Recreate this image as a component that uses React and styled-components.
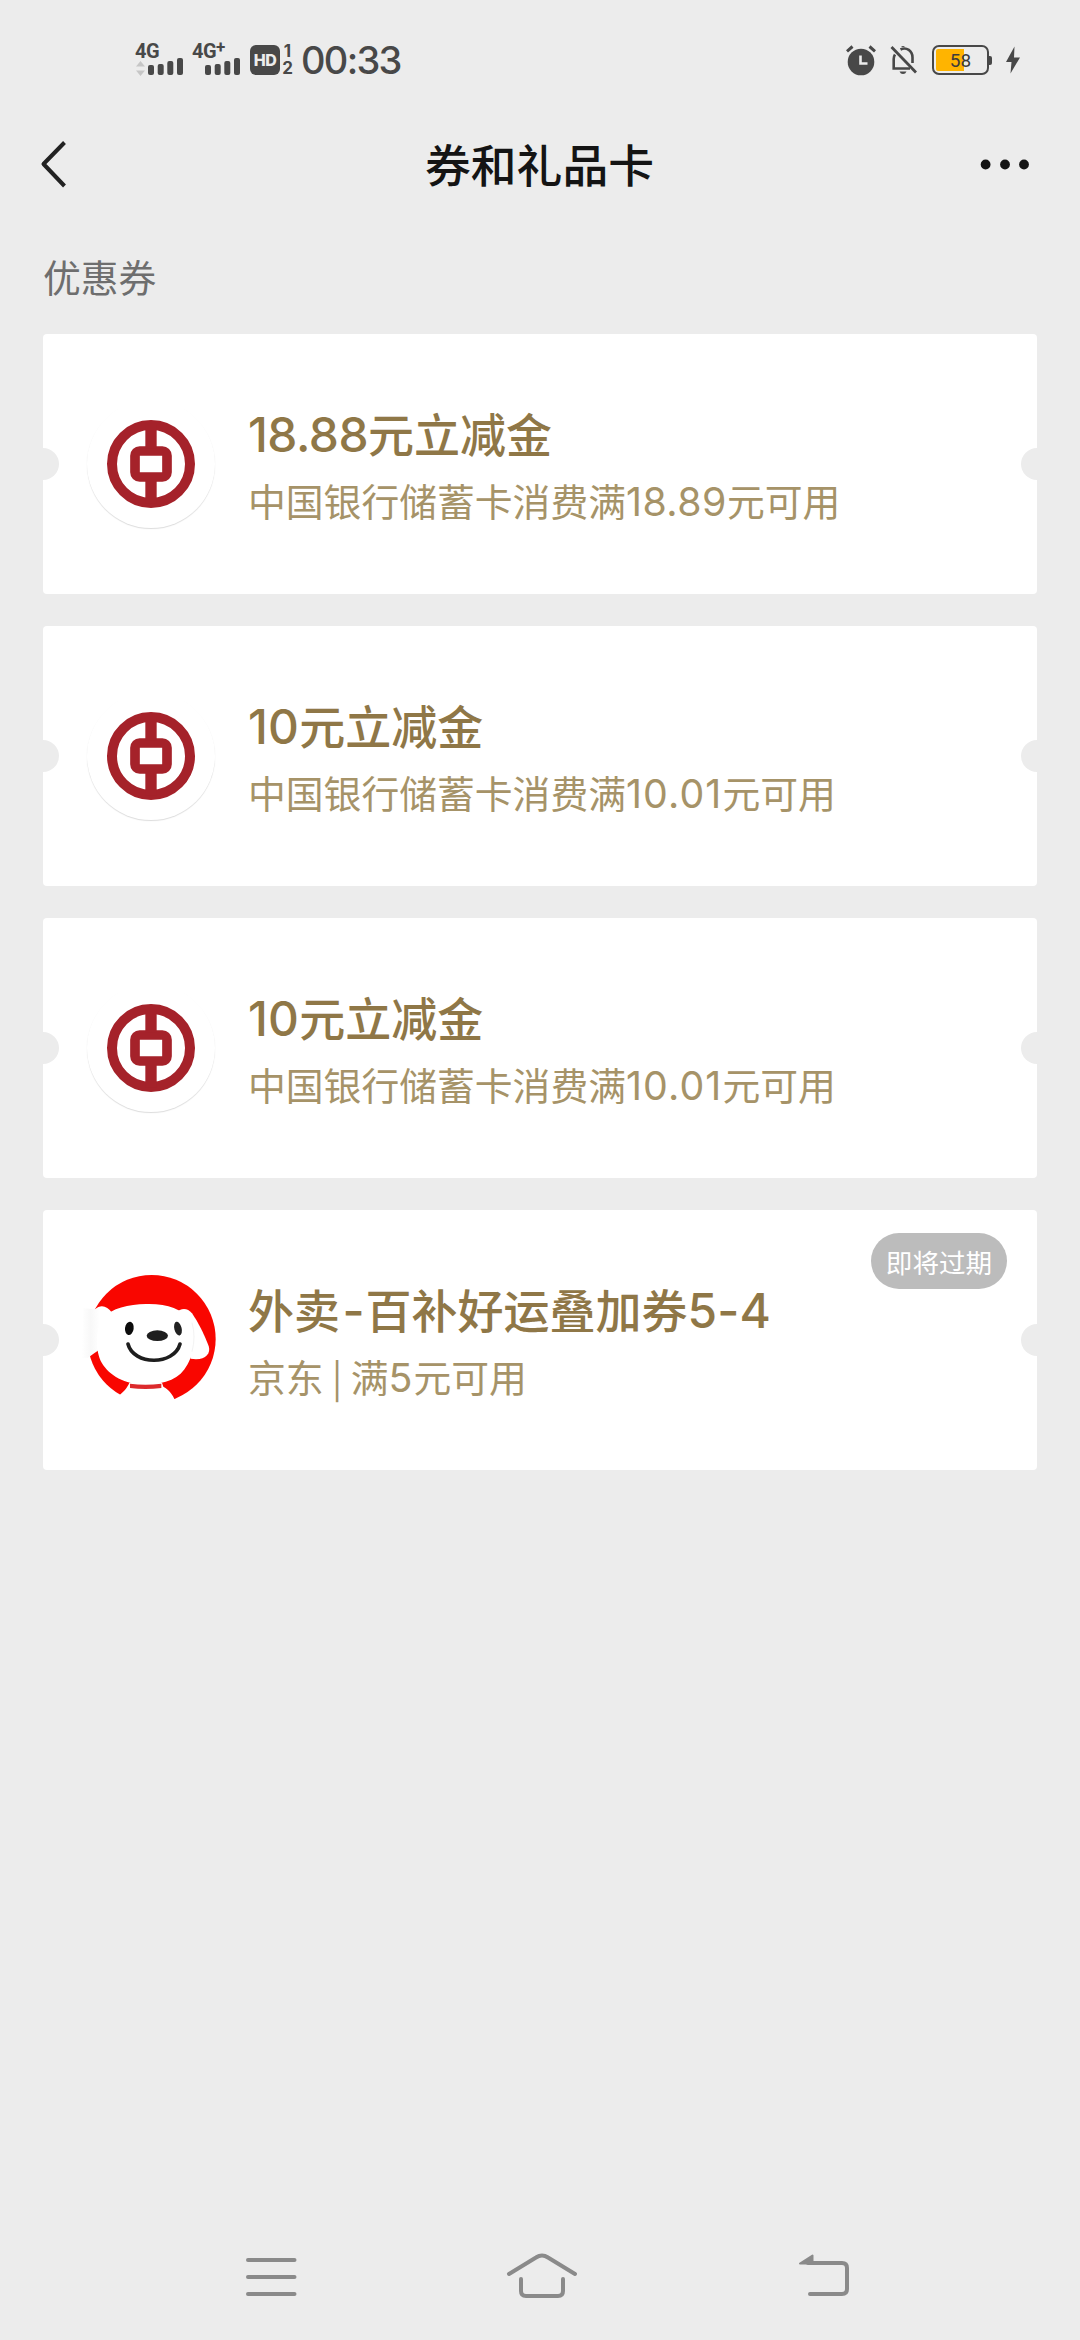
import React from "react";
import styled, { createGlobalStyle } from "styled-components";

const GlobalStyle = createGlobalStyle`
  * {
    box-sizing: border-box;
  }

  body {
    margin: 0;
    background: #ececec;
    font-family: "Noto Sans CJK SC", sans-serif;
  }

  svg {
    display: block;
    flex-shrink: 0;
    overflow: visible;
  }
`;

// Layout
const Screen = styled.div`
  width: 1080px;
  height: 2340px;
  display: flex;
  flex-direction: column;
  background: #ececec;
  overflow: hidden;
`;

const StatusBar = styled.div`
  height: 120px;
  padding: 0 59px 0 135px;
  display: flex;
  align-items: center;
  justify-content: space-between;
  color: #484848;
`;

const StatusGroup = styled.div`
  display: flex;
  align-items: center;
`;

const StatusIcons = styled(StatusGroup)`
  gap: 14px;
`;

const Signal = styled.div`
  position: relative;
  width: ${(props) => props.$width}px;
  height: 36px;
`;

const Network = styled.span`
  position: absolute;
  left: 0;
  top: -1px;
  font: 700 20px/20px Roboto, sans-serif;
  letter-spacing: -0.5px;
  white-space: nowrap;

  sup {
    font-size: 17px;
    line-height: 0;
    vertical-align: 5px;
  }
`;

const HdBadge = styled.div`
  width: 30px;
  height: 30px;
  border-radius: 6px;
  background: #484848;
  color: #ececec;
  display: flex;
  align-items: center;
  justify-content: center;
  font: 800 16px/30px Inter, sans-serif;
  letter-spacing: -0.5px;
`;

const SimNumbers = styled.div`
  width: 13px;
  margin-left: 1px;
  display: flex;
  flex-direction: column;
  align-items: center;
  font: 700 17px/17px Inter, sans-serif;
`;

const Clock = styled.div`
  margin-left: 7px;
  font: 500 38px/40px Inter, sans-serif;
  letter-spacing: -1.7px;
`;

const Battery = styled.div`
  position: relative;
  width: 57px;
  height: 30px;
  margin-right: 2px;
  padding: 2px;
  border: 2px solid #484848;
  border-radius: 7px;

  &::after {
    content: "";
    position: absolute;
    right: -5px;
    top: 9px;
    width: 3px;
    height: 9px;
    border-radius: 0 2px 2px 0;
    background: #484848;
  }
`;

const BatteryFill = styled.div`
  height: 100%;
  background: #ffb400;
  border-radius: 2px 0 0 2px;
`;

const BatteryText = styled.span`
  position: absolute;
  inset: 0;
  text-align: center;
  font: 400 19px/27px Roboto, sans-serif;
  color: #3c3c3c;
`;

const Header = styled.div`
  height: 90px;
  padding: 0 50px 0 38px;
  display: flex;
  align-items: center;
  justify-content: space-between;
`;

const Title = styled.h1`
  margin: 0 0 5px 31px;
  font-size: 45.8px;
  line-height: 60px;
  font-weight: 500;
  color: #141414;
`;

const SectionLabel = styled.div`
  height: 124px;
  padding: 38px 0 0 43px;
  font-size: 37.8px;
  line-height: 56px;
  color: #6e6e6e;
`;

const CouponList = styled.div`
  flex: 1;
  padding: 0 43px;
  display: flex;
  flex-direction: column;
  gap: 32px;
`;

const Card = styled.div`
  position: relative;
  height: 260px;
  padding-left: 44px;
  display: flex;
  align-items: center;
  background: #fff;
  border-radius: 4px;
  overflow: hidden;

  &::before,
  &::after {
    content: "";
    position: absolute;
    top: 114px;
    width: 32px;
    height: 32px;
    border-radius: 50%;
    background: #ececec;
  }

  &::before {
    left: -16px;
  }

  &::after {
    right: -16px;
  }
`;

const Avatar = styled.div`
  width: 128px;
  height: 128px;
  border-radius: 50%;
  box-shadow: ${(props) => (props.$shadow ? "0 1px 1px rgba(0, 0, 0, 0.14)" : "none")};
`;

const CardText = styled.div`
  margin-left: 33px;
  padding-top: 4px;
`;

const CardTitle = styled.div`
  font-size: 46px;
  line-height: 67px;
  font-weight: 500;
  color: #8f7747;
  white-space: nowrap;
`;

const CardDesc = styled.div`
  font-size: 37.8px;
  line-height: 67px;
  color: #a69368;
  white-space: nowrap;
`;

const Num = styled.span`
  font-family: Inter, sans-serif;
  font-size: 1.04em;
  line-height: 0;
  letter-spacing: ${(props) => props.$spacing || "-0.01em"};
`;

const Hyphen = styled(Num)`
  margin: 0 0.03em 0 0.05em;
`;

const Badge = styled.div`
  position: absolute;
  top: 23px;
  right: 30px;
  width: 136px;
  height: 56px;
  border-radius: 28px;
  background: #bcbcbc;
  color: #fff;
  font-size: 26.6px;
  line-height: 57px;
  text-align: center;
`;

const NavBar = styled.div`
  height: 126px;
  padding: 0 226px 0 244px;
  display: flex;
  align-items: center;
  justify-content: space-between;
`;

const HomeButton = styled.div`
  margin-right: 13px;
`;

const SignalBars = ({ x, arrows }) => (
  <svg width="60" height="36" viewBox="0 0 60 36" fill="currentColor">
    {arrows && (
      <g fill="#c6c6c6">
        <path d="M1 24.5 5.5 19l4.500 5.500z" />
        <path d="M1 28.500 5.500 34l4.500-5.500z" />
      </g>
    )}
    <rect x={x} y="23" width="6" height="10" rx="2" />
    <rect x={x + 9.7} y="22" width="6" height="11" rx="2" />
    <rect x={x + 19.3} y="19" width="6" height="14" rx="2" />
    <rect x={x + 29} y="16" width="6" height="17" rx="2" />
  </svg>
);

const AlarmIcon = () => (
  <svg width="30" height="30" viewBox="0 0 30 30">
    <circle cx="15" cy="17" r="13.300" fill="#484848" />
    <path d="M1 6.300 6.500 1.500M29 6.300 23.500 1.500" stroke="#484848" strokeWidth="3" />
    <path d="M14.500 10.500v8h7" fill="none" stroke="#ececec" strokeWidth="2.600" />
  </svg>
);

const BellOffIcon = () => (
  <svg width="28" height="30" viewBox="0 0 28 30" fill="none" stroke="#484848">
    <path d="M5 9.500C4 11 3.700 12 3.700 14v9.500H20M10.500 4.500c6-3 12 1.500 12 8v5.500" strokeWidth="2.600" />
    <path d="M1.500 2 26 27.500" strokeWidth="2.800" />
    <path d="M9.500 26.500h7q-1 2.500-3.500 2.500t-3.500-2.500zM11 2q2-2 4 0z" fill="#484848" stroke="none" />
  </svg>
);

const BoltIcon = () => (
  <svg width="16" height="28" viewBox="0 0 16 28" fill="#484848">
    <path d="M9.500 0.500 1 16h5.500L5.500 27.500 15 11.500H9z" />
  </svg>
);

const BankLogo = () => (
  <svg width="128" height="128" viewBox="171 240 384 384">
    <g fill="none" stroke="#a5222a">
      <circle cx="363" cy="432" r="117" strokeWidth="30" />
      <rect x="315" y="393" width="96" height="78" rx="14" strokeWidth="29" />
      <path d="M363 315v70M363 480v70" strokeWidth="34" />
    </g>
  </svg>
);

const DogLogo = () => (
  <svg width="128" height="128" viewBox="51 78 384 384">
    <defs>
      <linearGradient id="ear" x1="0" x2="1">
        <stop offset="0" stopColor="#fff" />
        <stop offset="0.300" stopColor="#f8f8f8" />
        <stop offset="0.600" stopColor="#fff" />
      </linearGradient>
    </defs>
    <circle cx="245" cy="267" r="192" fill="#f90600" />
    <path d="M40 175 75 178C92 162 112 168 126 188L100 290C80 305 68 312 54 323L35 325z" fill="url(#ear)" />
    <path d="M318 188C332 174 352 172 366 190C384 216 402 252 416 288C424 314 402 333 362 326z" fill="#fff" />
    <path d="M178 398C172 414 158 428 145 438L120 475H340L315 451C308 434 298 420 280 410L276 398z" fill="#fff" />
    <path
      d="M228 162C290 160 336 178 358 206C380 238 378 300 352 344C330 386 288 402 226 404C164 404 118 376 96 340C74 300 76 236 100 205C124 174 176 163 228 162z"
      fill="#fff"
    />
    <path d="M366 218Q378 260 366 305" fill="none" stroke="#f3f3f3" strokeWidth="3" />
    <path d="M180 401Q226 407 274 401V414Q226 420 180 414z" fill="#dc2a2c" />
    <ellipse cx="178" cy="235" rx="13" ry="20" transform="rotate(8 178 235)" fill="#0c0c0c" />
    <ellipse cx="324" cy="236" rx="11" ry="21" transform="rotate(-14 324 236)" fill="#222" />
    <ellipse cx="262" cy="257" rx="32" ry="16" fill="#1e1e1e" />
    <path d="M174 282C190 346 312 348 330 282" fill="none" stroke="#1e1e1e" strokeWidth="11" strokeLinecap="round" />
  </svg>
);

const coupons = [
  {
    title: <><Num>18.88</Num>元立减金</>,
    desc: <>中国银行储蓄卡消费满<Num $spacing="0.012em">18.89</Num>元可用</>,
    logo: "bank",
  },
  {
    title: <><Num $spacing="0.005em">10</Num>元立减金</>,
    desc: <>中国银行储蓄卡消费满<Num $spacing="0.028em">10.01</Num>元可用</>,
    logo: "bank",
  },
  {
    title: <><Num $spacing="0.005em">10</Num>元立减金</>,
    desc: <>中国银行储蓄卡消费满<Num $spacing="0.028em">10.01</Num>元可用</>,
    logo: "bank",
  },
  {
    title: <>外卖<Hyphen>-</Hyphen>百补好运叠加券<Num $spacing="0.005em">5-4</Num></>,
    desc: <>京东 | 满<Num $spacing="0.025em">5</Num>元可用</>,
    logo: "dog",
    badge: "即将过期",
  },
];

const Coupon = ({ title, desc, logo, badge }) => (
  <Card>
    <Avatar $shadow={logo === "bank"}>{logo === "bank" ? <BankLogo /> : <DogLogo />}</Avatar>
    <CardText>
      <CardTitle>{title}</CardTitle>
      <CardDesc>{desc}</CardDesc>
    </CardText>
    {badge && <Badge>{badge}</Badge>}
  </Card>
);

const App = () => {
  const battery = 58;

  return (
    <Screen>
      <GlobalStyle />
      <StatusBar>
        <StatusGroup>
          <Signal $width={57}>
            <Network>4G</Network>
            <SignalBars x={13} arrows />
          </Signal>
          <Signal $width={58}>
            <Network>
              4G<sup>+</sup>
            </Network>
            <SignalBars x={13} />
          </Signal>
          <HdBadge>HD</HdBadge>
          <SimNumbers>
            <span>1</span>
            <span>2</span>
          </SimNumbers>
          <Clock>00:33</Clock>
        </StatusGroup>
        <StatusIcons>
          <AlarmIcon />
          <BellOffIcon />
          <Battery>
            <BatteryFill style={{ width: `${battery}%` }} />
            <BatteryText>{battery}</BatteryText>
          </Battery>
          <BoltIcon />
        </StatusIcons>
      </StatusBar>

      <Header>
        <svg width="30" height="50" viewBox="0 0 30 50" fill="none" stroke="#222" strokeWidth="4">
          <path d="M26.500 2.500 5.500 24 26.500 46" strokeLinejoin="round" />
        </svg>
        <Title>券和礼品卡</Title>
        <svg width="50" height="12" viewBox="0 0 50 12" fill="#141414">
          <circle cx="5.600" cy="5.500" r="4.900" />
          <circle cx="25" cy="5.500" r="4.900" />
          <circle cx="44" cy="5.500" r="4.900" />
        </svg>
      </Header>

      <SectionLabel>优惠券</SectionLabel>

      <CouponList>
        {coupons.map((coupon, index) => (
          <Coupon key={index} {...coupon} />
        ))}
      </CouponList>

      <NavBar>
        <svg width="54" height="44" viewBox="0 0 54 44" stroke="#8a8a8a" strokeWidth="4" strokeLinecap="round">
          <path d="M4 5h46.500M4 22h46.500M4 39h46.500" />
        </svg>
        <HomeButton>
          <svg width="74" height="50" viewBox="0 0 74 50" fill="none" stroke="#8a8a8a" strokeWidth="4" strokeLinecap="round">
            <path d="M4 22 31 5.500Q37 1.500 43 5.500L70 22M16 27v12q0 5 5 5h32q5 0 5-5V27" />
          </svg>
        </HomeButton>
        <svg width="56" height="50" viewBox="0 0 56 50" fill="none" stroke="#8a8a8a" strokeWidth="4" strokeLinecap="round">
          <path d="M10 11h34q5 0 5 5v21q0 5-5 5H12" />
          <path d="M2 11.500 14.500 3.500v8z" fill="#8a8a8a" strokeWidth="2" strokeLinejoin="round" />
        </svg>
      </NavBar>
    </Screen>
  );
};

export default App;
